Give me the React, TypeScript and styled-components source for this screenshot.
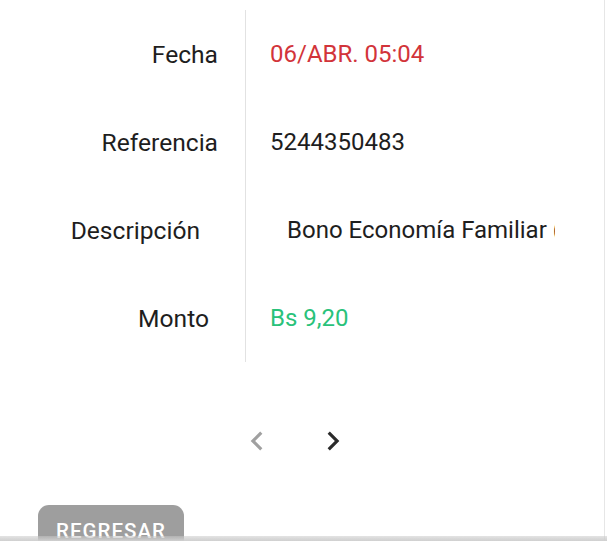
import React from "react";
import styled, { createGlobalStyle } from "styled-components";

const GlobalStyle = createGlobalStyle`
  html, body {
    margin: 0;
    padding: 0;
    background: #ffffff;
    overflow: hidden;
  }
  body {
    font-family: Roboto, "Noto Sans", Arial, sans-serif;
    color: #212121;
  }
`;

const Page = styled.div`
  width: 605px;
  height: 541px;
  border-right: 1px solid #e6e6e6;
  background: #ffffff;
  padding-top: 10px;
  box-sizing: border-box;
  overflow: hidden;
`;

const Table = styled.div`
  display: flex;
  flex-direction: column;
`;

const Row = styled.div`
  display: grid;
  grid-template-columns: 245px 310px;
  height: 88px;
`;

const Label = styled.div<{ $pad?: number }>`
  display: flex;
  align-items: center;
  justify-content: flex-end;
  padding-right: ${p => p.$pad ?? 27}px;
  font-size: 24.6px;
  color: #1e1e1e;
`;

type ValueProps = { $color?: string; $indent?: number };

const Value = styled.div<ValueProps>`
  display: flex;
  align-items: center;
  border-left: 1.5px solid #e2e2e2;
  padding-left: ${p => 24 + (p.$indent ?? 0)}px;
  font-size: 24px;
  color: ${p => p.$color ?? "#1e1e1e"};
  white-space: nowrap;
  overflow: hidden;
`;

const Pager = styled.div`
  width: 590px;
  margin-top: 60px;
  display: flex;
  justify-content: center;
  gap: 38px;
`;

const PagerButton = styled.button<{ $active?: boolean }>`
  width: 38px;
  height: 38px;
  padding: 0;
  border: none;
  background: none;
  display: flex;
  align-items: center;
  justify-content: center;
  color: ${p => (p.$active ? "#2b2b2b" : "#a0a0a0")};
  cursor: pointer;
`;

const BackButton = styled.button`
  margin: 45px 0 0 38px;
  width: 146px;
  height: 48px;
  border: none;
  border-radius: 11px;
  background: #9e9e9e;
  color: #ffffff;
  font-family: Roboto, Arial, sans-serif;
  font-weight: 500;
  font-size: 20.5px;
  letter-spacing: 1px;
  padding: 3px 0 0;
`;

const BottomShade = styled.div`
  position: fixed;
  left: 0;
  right: 0;
  bottom: 0;
  height: 5px;
  background: linear-gradient(to bottom, rgba(200, 200, 200, 0.5), #cfcfcf);
`;

const Chevron = ({ dir }: { dir: "left" | "right" }) => (
  <svg width="38" height="38" viewBox="0 0 24 24" fill="currentColor">
    {dir === "left" ? (
      <path d="M15.41 7.41L14 6l-6 6 6 6 1.41-1.41L10.83 12z" />
    ) : (
      <path d="M8.59 16.59L10 18l6-6-6-6-1.41 1.41L13.17 12z" />
    )}
  </svg>
);

const rows: {
  label: string;
  value: string;
  color?: string;
  indent?: number;
  pad?: number;
}[] = [
  { label: "Fecha", value: "06/ABR. 05:04", color: "#d2343a" },
  { label: "Referencia", value: "5244350483" },
  { label: "Descripción", value: "Bono Economía Familiar (Patria)", indent: 17, pad: 45 },
  { label: "Monto", value: "Bs 9,20", color: "#29c27a", pad: 36 },
];

export default function App() {
  return (
    <>
      <GlobalStyle />
      <Page>
        <Table>
          {rows.map(r => (
            <Row key={r.label}>
              <Label $pad={r.pad}>{r.label}</Label>
              <Value $color={r.color} $indent={r.indent}>
                {r.value}
              </Value>
            </Row>
          ))}
        </Table>
        <Pager>
          <PagerButton aria-label="Anterior">
            <Chevron dir="left" />
          </PagerButton>
          <PagerButton $active aria-label="Siguiente">
            <Chevron dir="right" />
          </PagerButton>
        </Pager>
        <BackButton>REGRESAR</BackButton>
      </Page>
      <BottomShade />
    </>
  );
}
